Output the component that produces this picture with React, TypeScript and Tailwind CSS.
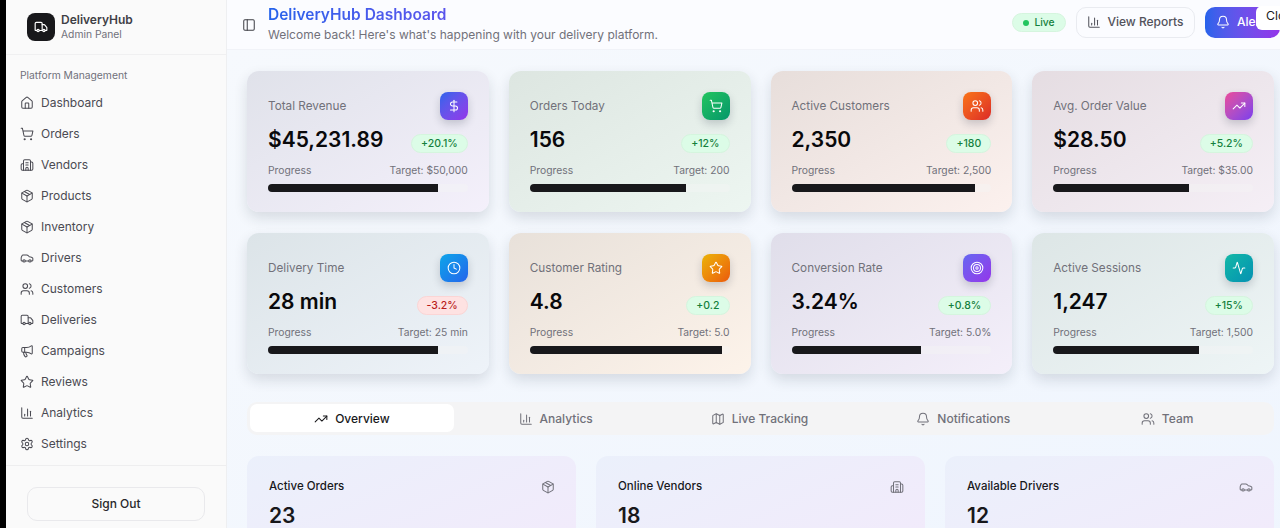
import {
  Activity, BarChart3, Bell, Building2, Car, Clock, DollarSign, House, Map, Megaphone, Package,
  PanelLeft, Settings, ShoppingCart, Star, Target, TrendingUp, Truck, Users,
} from 'lucide-react';

const navItems = [
  { icon: House, label: 'Dashboard' },
  { icon: ShoppingCart, label: 'Orders' },
  { icon: Building2, label: 'Vendors' },
  { icon: Package, label: 'Products' },
  { icon: Package, label: 'Inventory' },
  { icon: Car, label: 'Drivers' },
  { icon: Users, label: 'Customers' },
  { icon: Truck, label: 'Deliveries' },
  { icon: Megaphone, label: 'Campaigns' },
  { icon: Star, label: 'Reviews' },
  { icon: BarChart3, label: 'Analytics' },
  { icon: Settings, label: 'Settings' },
];

const stats = [
  { title: 'Total Revenue', value: '$45,231.89', delta: '+20.1%', target: 'Target: $50,000', pct: 'w-[85%]', icon: DollarSign, card: 'from-[#e0e2ea] to-[#f4f0fb]', tile: 'from-[#2563eb] to-[#9333ea]' },
  { title: 'Orders Today', value: '156', delta: '+12%', target: 'Target: 200', pct: 'w-[78%]', icon: ShoppingCart, card: 'from-[#dde6e1] to-[#edf6f1]', tile: 'from-[#22c55e] to-[#059669]' },
  { title: 'Active Customers', value: '2,350', delta: '+180', target: 'Target: 2,500', pct: 'w-[92%]', icon: Users, card: 'from-[#e7dedb] to-[#fcf1ee]', tile: 'from-[#f97316] to-[#dc2626]' },
  { title: 'Avg. Order Value', value: '$28.50', delta: '+5.2%', target: 'Target: $35.00', pct: 'w-[68%]', icon: TrendingUp, card: 'from-[#e5dde2] to-[#f5eff6]', tile: 'from-[#ec4899] to-[#7c3aed]' },
  { title: 'Delivery Time', value: '28 min', delta: '-3.2%', target: 'Target: 25 min', pct: 'w-[85%]', icon: Clock, card: 'from-[#dce4e8] to-[#eef3f9]', tile: 'from-[#0ea5e9] to-[#2563eb]', down: true },
  { title: 'Customer Rating', value: '4.8', delta: '+0.2', target: 'Target: 5.0', pct: 'w-[96%]', icon: Star, card: 'from-[#e8e1da] to-[#fdf3ea]', tile: 'from-[#eab308] to-[#ea580c]' },
  { title: 'Conversion Rate', value: '3.24%', delta: '+0.8%', target: 'Target: 5.0%', pct: 'w-[65%]', icon: Target, card: 'from-[#e0deea] to-[#f4effa]', tile: 'from-[#6366f1] to-[#9333ea]' },
  { title: 'Active Sessions', value: '1,247', delta: '+15%', target: 'Target: 1,500', pct: 'w-[73%]', icon: Activity, card: 'from-[#dde6e6] to-[#eef5f6]', tile: 'from-[#14b8a6] to-[#0891b2]' },
];

const tabs = [
  { icon: TrendingUp, label: 'Overview', active: true },
  { icon: BarChart3, label: 'Analytics' },
  { icon: Map, label: 'Live Tracking' },
  { icon: Bell, label: 'Notifications' },
  { icon: Users, label: 'Team' },
];

const lower = [
  { title: 'Active Orders', value: '23', icon: Package },
  { title: 'Online Vendors', value: '18', icon: Building2 },
  { title: 'Available Drivers', value: '12', icon: Car },
];

function Sidebar() {
  return (
    <aside className="flex h-full w-[221px] shrink-0 flex-col border-r border-[#eeeff1] bg-[#fafafa]">
      <div className="flex h-[55px] items-center gap-[6px] border-b border-[#f0f0f1] pl-[21px]">
        <span className="flex h-7 w-7 items-center justify-center rounded-lg bg-[#18181b] text-white"><Truck className="h-[14px] w-[14px]" /></span>
        <div>
          <p className="text-[12px] font-semibold leading-[15px] text-[#3f3f46]">DeliveryHub</p>
          <p className="text-[10.3px] leading-[15px] text-[#71717a]">Admin Panel</p>
        </div>
      </div>
      <p className="mt-[13px] pl-[14px] text-[10.3px] leading-[14px] text-[#71717a]">Platform Management</p>
      <nav className="mt-[5px] flex flex-col">
        {navItems.map((item) => (
          <a key={item.label} className="flex h-[31px] items-center gap-[7px] pl-[14px] text-[12px] text-[#4a4a52]">
            <item.icon className="h-[14px] w-[14px]" strokeWidth={1.75} />
            <span>{item.label}</span>
          </a>
        ))}
      </nav>
      <div className="mt-[6px] border-t border-[#eeeeef] px-[21px] pt-[21px]">
        <button className="flex h-[34px] w-[178px] items-center justify-center rounded-[10px] border border-[#e9e9ec] bg-[#fafafa] text-[12px] font-medium text-[#27272a]">Sign Out</button>
      </div>
    </aside>
  );
}

function Header() {
  return (
    <header className="flex h-[50px] shrink-0 items-center border-b border-[#f1f3f8] bg-[#fbfcff] pl-[15px]">
      <PanelLeft className="h-[14px] w-[14px] text-[#3f3f46]" strokeWidth={1.75} />
      <div className="ml-[12px]">
        <h1 className="bg-gradient-to-r from-[#2563eb] to-[#7c3aed] bg-clip-text text-[15.5px] font-semibold leading-[20px] text-transparent">DeliveryHub Dashboard</h1>
        <p className="text-[12px] leading-[20px] text-[#71717a]">Welcome back! Here's what's happening with your delivery platform.</p>
      </div>
      <div className="ml-auto flex items-center gap-[10px] pb-[5px]">
        <span className="mt-[1px] flex h-[19px] w-[54px] items-center justify-center gap-[5px] rounded-full border border-[#d5f5de] bg-[#dcfce7] text-[10.3px] font-medium text-[#15803d]"><span className="h-[6px] w-[6px] rounded-full bg-[#22c55e]" />Live</span>
        <button className="flex h-[31px] w-[119px] items-center justify-center gap-[6px] rounded-[10px] border border-[#e9ebf0] bg-[#fbfcff] text-[12px] font-medium text-[#52525b]"><BarChart3 className="h-[14px] w-[14px]" strokeWidth={1.75} />View Reports</button>
        <button className="flex h-[31px] w-[75px] items-center gap-[7px] overflow-hidden rounded-[10px] bg-gradient-to-r from-[#2563eb] to-[#9333ea] pl-[11px] text-[12px] font-medium text-white"><Bell className="h-[14px] w-[14px] shrink-0" strokeWidth={1.75} />Alerts</button>
      </div>
    </header>
  );
}

function StatCard({ stat }: { stat: (typeof stats)[number] }) {
  return (
    <div className={`h-[141px] rounded-[12px] bg-gradient-to-br p-[21px] shadow-[0_6px_14px_rgba(30,41,59,0.14)] ${stat.card}`}>
      <div className="flex h-[28px] items-center justify-between">
        <p className="pt-[1px] text-[11.75px] text-[#71717a]">{stat.title}</p>
        <span className={`flex h-7 w-7 items-center justify-center rounded-lg bg-gradient-to-br text-white shadow-[0_4px_8px_rgba(30,41,59,0.2)] ${stat.tile}`}><stat.icon className="h-[14px] w-[14px]" strokeWidth={1.75} /></span>
      </div>
      <div className="mt-[5px] flex h-[30px] items-center justify-between">
        <p className="text-[21px] font-semibold leading-[30px] text-[#09090b]">{stat.value}</p>
        {stat.down ? (
          <span className="mt-[7px] flex h-[19px] items-center rounded-full border border-[#fbd5d5] bg-[#fee2e2] px-[9px] text-[10.5px] font-medium text-[#b91c1c]">{stat.delta}</span>
        ) : (
          <span className="mt-[7px] flex h-[19px] items-center rounded-full border border-[#d5f5de] bg-[#dcfce7] px-[9px] text-[10.5px] font-medium text-[#15803d]">{stat.delta}</span>
        )}
      </div>
      <div className="mt-[8px] flex items-center justify-between text-[10.3px] leading-[14px] text-[#71717a]">
        <span>Progress</span>
        <span>{stat.target}</span>
      </div>
      <div className="mt-[7px] h-[8px] overflow-hidden rounded-full bg-[#f4f4f5]/40">
        <div className={`h-full bg-[#18181b] ${stat.pct}`} />
      </div>
    </div>
  );
}

export default function App() {
  return (
    <div className="relative flex h-screen overflow-hidden border-l-[6px] border-black bg-[#f5f8fe] font-['Inter',sans-serif]">
      <Sidebar />
      <div className="flex min-w-0 flex-1 flex-col">
        <Header />
        <main className="flex-1 bg-gradient-to-br from-[#f6f9fd] to-[#eff5fe] pl-[20px] pr-[6px] pt-[21px]">
          <div className="grid grid-cols-4 gap-x-[20px] gap-y-[21px]">
            {stats.map((stat) => <StatCard key={stat.title} stat={stat} />)}
          </div>
          <div className="mt-[28px] grid h-[33px] grid-cols-5 rounded-[10px] bg-[#f4f4f5] pb-[3px] pl-[3px] pr-[5px] pt-[2px]">
            {tabs.map((tab) => (
              <button key={tab.label} className={`flex items-center justify-center gap-[7px] rounded-[7px] pt-[1px] text-[12px] font-medium ${tab.active ? 'bg-white text-[#18181b]' : 'text-[#71717a]'}`}>
                <tab.icon className="h-[14px] w-[14px]" strokeWidth={1.75} />{tab.label}
              </button>
            ))}
          </div>
          <div className="mt-[21px] grid grid-cols-3 gap-[20px]">
            {lower.map((card) => (
              <div key={card.title} className="h-[142px] rounded-[12px] bg-gradient-to-br from-[#ebf0fb] to-[#f3e9fb] pl-[22px] pr-[21px] pt-[22px]">
                <div className="flex items-center justify-between">
                  <p className="text-[11.5px] font-medium text-[#18181b]">{card.title}</p>
                  <card.icon className="h-[14px] w-[14px] text-[#71717a]" strokeWidth={1.75} />
                </div>
                <p className="mt-[6px] text-[21px] font-semibold leading-[30px] text-[#18181b]">{card.value}</p>
              </div>
            ))}
          </div>
        </main>
      </div>
      <div className="absolute right-0 top-[6px] h-[24px] w-[24px] overflow-hidden rounded-l-[6px] bg-white pl-[10px] text-[12.25px] leading-[20px] text-[#18181b]">Close</div>
    </div>
  );
}
